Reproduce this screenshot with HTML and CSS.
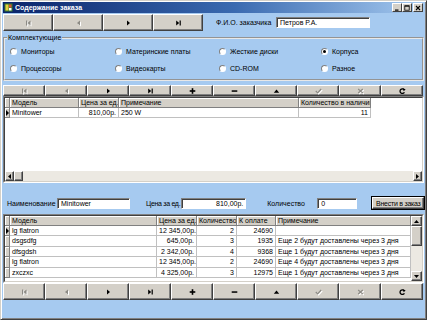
FILE: index.html
```html
<!DOCTYPE html>
<html lang="ru">
<head>
<meta charset="utf-8">
<title>Содержание заказа</title>
<link rel="stylesheet" href="styles.css">
</head>
<body>
<svg class="defs" width="0" height="0" aria-hidden="true">
  <defs>
    <g id="i-first"><rect x="1" y="0.5" width="1.2" height="5"/><polygon points="5.5,0.5 2.5,3 5.5,5.5"/></g>
    <g id="i-prior"><polygon points="5,0.5 2,3 5,5.5"/></g>
    <g id="i-next"><polygon points="2,0.5 5,3 2,5.5"/></g>
    <g id="i-last"><polygon points="1.2,0.5 4.2,3 1.2,5.5"/><rect x="4.6" y="0.5" width="1.2" height="5"/></g>
    <g id="i-plus"><rect x="0.7" y="2.2" width="5.6" height="1.6"/><rect x="2.7" y="0.2" width="1.6" height="5.6"/></g>
    <g id="i-minus"><rect x="0.7" y="2.3" width="5.6" height="1.5"/></g>
    <g id="i-edit"><polygon points="0.8,4.8 3.5,1.5 6.2,4.8"/></g>
    <g id="i-post"><polyline points="0.8,3 2.6,4.8 6.2,1" fill="none" stroke-width="1.2"/></g>
    <g id="i-cancel"><path d="M1.2 1 L5.8 5 M5.8 1 L1.2 5" fill="none" stroke-width="1.2"/></g>
    <g id="i-refresh"><path d="M5.2 1.8 A2.3 2.3 0 1 0 5.4 4.2" fill="none" stroke-width="1.3"/><polygon points="3.6,0.2 6.6,1.2 4.8,3.2"/></g>
  </defs>
</svg>

<div class="window">
  <div class="titlebar">
    <svg class="appicon" width="9" height="9" viewBox="0 0 9 9">
      <rect x="0.5" y="0.5" width="8" height="8" fill="#3a7a2a"/>
      <rect x="1.5" y="1.5" width="3" height="6" fill="#e8d040"/>
      <rect x="5" y="1.5" width="2.5" height="3" fill="#e05030"/>
      <rect x="5" y="5" width="2.5" height="2.5" fill="#ffffff"/>
    </svg>
    <span class="title">Содержание заказа</span>
    <div class="wbtns">
      <span class="wbtn"><svg width="6" height="6" viewBox="0 0 6 6"><rect x="1" y="4.5" width="3.5" height="1.2" fill="#000"/></svg></span>
      <span class="wbtn"><svg width="6" height="6" viewBox="0 0 6 6"><rect x="0.8" y="0.8" width="4.4" height="4.4" fill="none" stroke="#000" stroke-width="0.8"/><rect x="0.8" y="0.6" width="4.4" height="1" fill="#000"/></svg></span>
      <span class="wbtn close"><svg width="6" height="6" viewBox="0 0 6 6"><path d="M1 1 L5 5 M5 1 L1 5" stroke="#000" stroke-width="1.1"/></svg></span>
    </div>
  </div>

  <div class="toprow">
    <div class="nav nav-big">
      <div class="nb dis"><svg viewBox="0 0 7 6"><use href="#i-first"/></svg></div>
      <div class="nb dis"><svg viewBox="0 0 7 6"><use href="#i-prior"/></svg></div>
      <div class="nb"><svg viewBox="0 0 7 6"><use href="#i-next"/></svg></div>
      <div class="nb"><svg viewBox="0 0 7 6"><use href="#i-last"/></svg></div>
    </div>
    <span class="lbl lbl-fio">Ф.И.О. заказчика</span>
    <div class="edit edit-fio">Петров Р.А.</div>
  </div>

  <fieldset class="group">
    <legend>Комплектующие</legend>
    <div class="radios">
      <div class="radio"><span class="rc"></span>Мониторы</div>
      <div class="radio"><span class="rc"></span>Материнские платы</div>
      <div class="radio"><span class="rc"></span>Жесткие диски</div>
      <div class="radio"><span class="rc on"></span>Корпуса</div>
      <div class="radio"><span class="rc"></span>Процессоры</div>
      <div class="radio"><span class="rc"></span>Видеокарты</div>
      <div class="radio"><span class="rc"></span>CD-ROM</div>
      <div class="radio"><span class="rc"></span>Разное</div>
    </div>
  </fieldset>

  <div class="nav nav-small">
    <div class="nb dis"><svg viewBox="0 0 7 6"><use href="#i-first"/></svg></div>
    <div class="nb dis"><svg viewBox="0 0 7 6"><use href="#i-prior"/></svg></div>
    <div class="nb"><svg viewBox="0 0 7 6"><use href="#i-next"/></svg></div>
    <div class="nb"><svg viewBox="0 0 7 6"><use href="#i-last"/></svg></div>
    <div class="nb"><svg viewBox="0 0 7 6"><use href="#i-plus"/></svg></div>
    <div class="nb"><svg viewBox="0 0 7 6"><use href="#i-minus"/></svg></div>
    <div class="nb"><svg viewBox="0 0 7 6"><use href="#i-edit"/></svg></div>
    <div class="nb dis"><svg viewBox="0 0 7 6"><use href="#i-post"/></svg></div>
    <div class="nb dis"><svg viewBox="0 0 7 6"><use href="#i-cancel"/></svg></div>
    <div class="nb"><svg viewBox="0 0 7 6"><use href="#i-refresh"/></svg></div>
  </div>

  <div class="grid grid1">
    <div class="gin gin1">
      <div class="gbody">
        <div class="hrow">
          <div class="hc ind"></div>
          <div class="hc g1-model">Модель</div>
          <div class="hc g1-price">Цена за ед.</div>
          <div class="hc g1-note">Примечание</div>
          <div class="hc g1-qty">Количество в наличии</div>
        </div>
        <div class="drow">
          <div class="ic"><span class="tri"></span></div>
          <div class="dc g1-model">Minitower</div>
          <div class="dc g1-price num">810,00р.</div>
          <div class="dc g1-note">250 W</div>
          <div class="dc g1-qty num">11</div>
        </div>
      </div>
      <div class="hscroll">
        <div class="hsbtn"><svg width="3" height="5" viewBox="0 0 3 5"><polygon points="3,0 0,2.5 3,5" fill="#000"/></svg></div>
        <div class="hthumb"></div>
        <div class="track"></div>
        <div class="hsbtn"><svg width="3" height="5" viewBox="0 0 3 5"><polygon points="0,0 3,2.5 0,5" fill="#000"/></svg></div>
      </div>
    </div>
  </div>

  <div class="panel">
    <span class="lbl lbl-name">Наименование</span>
    <div class="edit edit-name">Minitower</div>
    <span class="lbl lbl-price">Цена за ед.</span>
    <div class="edit edit-price">810,00р.</div>
    <span class="lbl lbl-qty">Количество</span>
    <div class="edit edit-qty">0</div>
    <div class="btn"><span class="btn-in">Внести в заказ</span></div>
  </div>

  <div class="grid grid2">
    <div class="gin gin2">
      <div class="gcols">
        <div class="hrow">
          <div class="hc ind"></div>
          <div class="hc g2-model">Модель</div>
          <div class="hc g2-price">Цена за ед.</div>
          <div class="hc g2-qty">Количество</div>
          <div class="hc g2-sum">К оплате</div>
          <div class="hc g2-note">Примечание</div>
        </div>
        <div class="drow">
          <div class="ic"><span class="tri"></span></div>
          <div class="dc g2-model">lg flatron</div>
          <div class="dc g2-price num">12 345,00р.</div>
          <div class="dc g2-qty num">2</div>
          <div class="dc g2-sum num">24690</div>
          <div class="dc g2-note"></div>
        </div>
        <div class="drow">
          <div class="ic"></div>
          <div class="dc g2-model">dsgsdfg</div>
          <div class="dc g2-price num">645,00р.</div>
          <div class="dc g2-qty num">3</div>
          <div class="dc g2-sum num">1935</div>
          <div class="dc g2-note">Еще 2 будут доставлены через 3 дня</div>
        </div>
        <div class="drow">
          <div class="ic"></div>
          <div class="dc g2-model">dfsgdsh</div>
          <div class="dc g2-price num">2 342,00р.</div>
          <div class="dc g2-qty num">4</div>
          <div class="dc g2-sum num">9368</div>
          <div class="dc g2-note">Еще 1 будут доставлены через 3 дня</div>
        </div>
        <div class="drow">
          <div class="ic"></div>
          <div class="dc g2-model">lg flatron</div>
          <div class="dc g2-price num">12 345,00р.</div>
          <div class="dc g2-qty num">2</div>
          <div class="dc g2-sum num">24690</div>
          <div class="dc g2-note">Еще 4 будут доставлены через 3 дня</div>
        </div>
        <div class="drow">
          <div class="ic"></div>
          <div class="dc g2-model">zxczxc</div>
          <div class="dc g2-price num">4 325,00р.</div>
          <div class="dc g2-qty num">3</div>
          <div class="dc g2-sum num">12975</div>
          <div class="dc g2-note">Еще 1 будут доставлены через 3 дня</div>
        </div>
      </div>
      <div class="vscroll">
        <div class="sbtn"><svg width="5" height="3" viewBox="0 0 5 3"><polygon points="0,3 2.5,0 5,3" fill="#000"/></svg></div>
        <div class="thumb"></div>
        <div class="track"></div>
        <div class="sbtn"><svg width="5" height="3" viewBox="0 0 5 3"><polygon points="0,0 2.5,3 5,0" fill="#000"/></svg></div>
      </div>
    </div>
  </div>

  <div class="nav nav-bottom">
    <div class="nb dis"><svg viewBox="0 0 7 6"><use href="#i-first"/></svg></div>
    <div class="nb dis"><svg viewBox="0 0 7 6"><use href="#i-prior"/></svg></div>
    <div class="nb"><svg viewBox="0 0 7 6"><use href="#i-next"/></svg></div>
    <div class="nb"><svg viewBox="0 0 7 6"><use href="#i-last"/></svg></div>
    <div class="nb"><svg viewBox="0 0 7 6"><use href="#i-plus"/></svg></div>
    <div class="nb"><svg viewBox="0 0 7 6"><use href="#i-minus"/></svg></div>
    <div class="nb"><svg viewBox="0 0 7 6"><use href="#i-edit"/></svg></div>
    <div class="nb dis"><svg viewBox="0 0 7 6"><use href="#i-post"/></svg></div>
    <div class="nb dis"><svg viewBox="0 0 7 6"><use href="#i-cancel"/></svg></div>
    <div class="nb"><svg viewBox="0 0 7 6"><use href="#i-refresh"/></svg></div>
  </div>

  <div class="bottom"></div>
</div>
</body>
</html>
```

FILE: styles.css
```css
* { box-sizing: border-box; margin: 0; padding: 0; }

html, body {
  width: 427px;
  height: 320px;
  overflow: hidden;
}

body {
  background: #a6caf0;
  font-family: "Liberation Sans", Arial, sans-serif;
  font-size: 7px;
  color: #000;
}

.defs { position: absolute; width: 0; height: 0; }

.window {
  width: 427px;
  height: 320px;
  display: flex;
  flex-direction: column;
  background: #a6caf0;
  border: 1px solid;
  border-color: #d4d0c8 #404040 #404040 #d4d0c8;
  padding: 1px 2px 2px 2px;
  box-shadow: inset 1px 1px #ffffff, inset -1px -1px #808080;
}

/* title bar */
.titlebar {
  height: 11px;
  flex: none;
  display: flex;
  align-items: center;
  background: linear-gradient(90deg, #0a246a 0%, #3a6ab0 55%, #a6caf0 100%);
  color: #fff;
  padding-left: 1px;
}
.appicon { flex: none; margin-right: 2px; }
.title { font-weight: bold; font-size: 7px; white-space: nowrap; }
.wbtns { margin-left: auto; display: flex; margin-right: 1px; }
.wbtn {
  width: 10px;
  height: 9px;
  background: #d4d0c8;
  border: 1px solid;
  border-color: #fff #404040 #404040 #fff;
  display: flex;
  align-items: center;
  justify-content: center;
}
.wbtn.close { margin-left: 1px; }

/* top row */
.toprow {
  margin-top: 1px;
  height: 17px;
  flex: none;
  display: flex;
  align-items: center;
}

.nav { display: flex; flex: none; }
.nb {
  background: #d4d0c8;
  border: 1px solid;
  border-color: #ffffff #404040 #404040 #ffffff;
  box-shadow: inset -1px -1px #808080;
  display: flex;
  align-items: center;
  justify-content: center;
  flex: none;
}
.nb svg { width: 7px; height: 6px; fill: #000; stroke: #000; stroke-width: 0; }
.nb.dis svg { fill: #8c8a84; stroke: #8c8a84; filter: drop-shadow(1px 1px 0 #ffffff); }

.nav-big .nb { width: 50px; height: 17px; }
.nav-small { margin-top: 4px; height: 11px; }
.nav-small .nb, .nav-bottom .nb { width: 42px; }
.nav-small .nb { height: 11px; }
.nav-bottom { height: 17px; }
.nav-bottom .nb { height: 17px; }

.lbl { white-space: nowrap; flex: none; }
.lbl-fio { margin-left: 13px; width: 60px; }

.edit {
  background: #fff;
  border: 1px solid;
  border-color: #808080 #ffffff #ffffff #808080;
  box-shadow: inset 1px 1px #404040;
  height: 11px;
  line-height: 9px;
  padding: 0 2px 0 3px;
  white-space: nowrap;
  overflow: hidden;
  flex: none;
}
.edit-fio { width: 94px; }

/* group box */
.group {
  margin-top: 3px;
  height: 47px;
  flex: none;
  border: 2px groove #e8e8e8;
  padding: 1px 0 0 5px;
  min-width: 0;
}
.group legend {
  font-size: 7px;
  line-height: 8px;
  padding: 0 1px;
  margin-left: -3px;
}
.radios {
  display: grid;
  grid-template-columns: 105px 104px 102px 1fr;
  grid-auto-rows: 17px;
}
.radio {
  display: flex;
  align-items: center;
  white-space: nowrap;
}
.rc {
  width: 7px;
  height: 7px;
  border-radius: 50%;
  background: #fff;
  border: 1px solid;
  border-color: #808080 #ffffff #ffffff #808080;
  margin-right: 4px;
  display: flex;
  align-items: center;
  justify-content: center;
  flex: none;
}
.rc.on::after {
  content: "";
  width: 3px;
  height: 3px;
  border-radius: 50%;
  background: #000;
}

/* grids */
.grid {
  flex: none;
  border: 1px solid;
  border-color: #808080 #ffffff #ffffff #808080;
}
.gin {
  height: 100%;
  background: #fff;
  border: 1px solid;
  border-color: #404040 #d4d0c8 #d4d0c8 #404040;
  overflow: hidden;
}
.grid1 { height: 87px; }
.grid2 { height: 69px; }

.gin1 { display: flex; flex-direction: column; }
.gbody { flex: 1; }

.hrow, .drow { display: flex; }
.hrow { height: 10px; }
.drow { height: 10.4px; }

.hc {
  flex: none;
  height: 100%;
  background: #d4d0c8;
  border-right: 1px solid #808080;
  border-bottom: 1px solid #808080;
  box-shadow: inset 1px 1px #ffffff;
  padding-left: 2px;
  line-height: 9px;
  white-space: nowrap;
  overflow: hidden;
}
.ic {
  flex: none;
  width: 5px;
  height: 100%;
  background: #d4d0c8;
  border-right: 1px solid #808080;
  border-bottom: 1px solid #808080;
  box-shadow: inset 1px 1px #ffffff;
  display: flex;
  align-items: center;
  justify-content: center;
}
.tri {
  width: 0;
  height: 0;
  border-left: 3px solid #000;
  border-top: 3px solid transparent;
  border-bottom: 3px solid transparent;
}
.dc {
  flex: none;
  height: 100%;
  border-right: 1px solid #c0c0c0;
  border-bottom: 1px solid #c0c0c0;
  padding: 0 2px;
  line-height: 9.4px;
  white-space: nowrap;
  overflow: hidden;
}
.num { text-align: right; }
.ind { width: 5px; padding: 0; }

.g1-model { width: 69px; }
.g1-price { width: 40px; }
.g1-note { width: 180px; }
.g1-qty { width: 72px; }

.g2-model { width: 147px; }
.g2-price { width: 40px; }
.g2-qty { width: 40px; }
.g2-sum { width: 39px; }
.g2-note { width: 135px; }

.gin2 { display: flex; }
.gcols { flex: 1; }

.vscroll {
  flex: none;
  width: 11px;
  display: flex;
  flex-direction: column;
  background: #ece9e2;
}
.hscroll {
  flex: none;
  height: 10px;
  display: flex;
  background: #ece9e2;
}
.sbtn, .thumb, .hsbtn, .hthumb {
  background: #d4d0c8;
  border: 1px solid;
  border-color: #ffffff #404040 #404040 #ffffff;
  box-shadow: inset -1px -1px #808080;
  flex: none;
}
.sbtn {
  height: 10px;
  display: flex;
  align-items: center;
  justify-content: center;
}
.hsbtn {
  width: 9px;
  display: flex;
  align-items: center;
  justify-content: center;
}
.thumb { height: 20px; }
.hthumb { width: 9px; }
.track { flex: 1; }

/* middle panel */
.panel {
  height: 31px;
  flex: none;
  display: flex;
  align-items: center;
  padding: 9px 0 0 4px;
}
.lbl-name { width: 50px; }
.edit-name { width: 73px; }
.lbl-price { margin-left: 16px; letter-spacing: -0.3px; }
.edit-price { margin-left: 1px; width: 65px; text-align: right; }
.lbl-qty { margin-left: 21px; width: 50px; }
.edit-qty { width: 40px; }
.btn {
  margin-left: 14px;
  width: 54px;
  height: 14px;
  border: 1px solid #000;
  flex: none;
}
.btn-in {
  display: flex;
  align-items: center;
  justify-content: center;
  height: 100%;
  background: #d4d0c8;
  border: 1px solid;
  border-color: #ffffff #404040 #404040 #ffffff;
  box-shadow: inset -1px -1px #808080;
  white-space: nowrap;
  letter-spacing: -0.25px;
}

.bottom { flex: 1; }
```
